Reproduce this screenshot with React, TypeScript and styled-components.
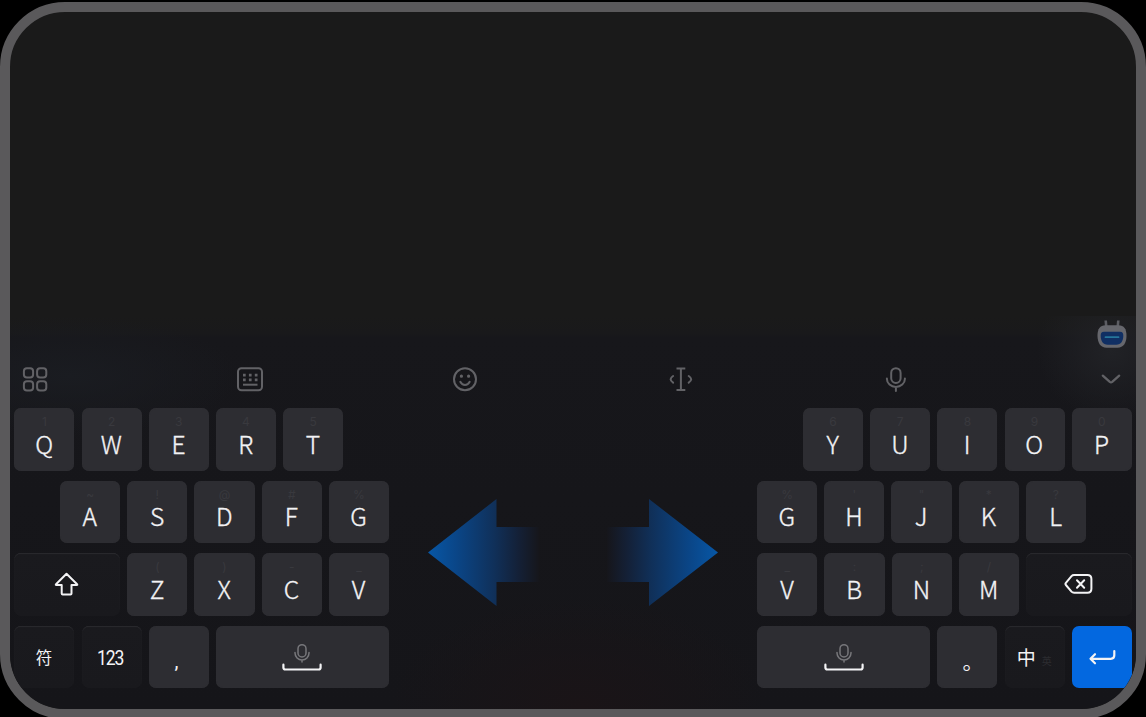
import React from 'react';
import styled, { createGlobalStyle, css } from 'styled-components';

const GlobalStyle = createGlobalStyle`
  * { box-sizing: border-box; }
  html, body { margin: 0; background: #000; overflow: hidden; }
`;

const Page = styled.main`
  height: 717px;
  width: 1146px;
  padding-top: 2px;
  overflow: hidden;
  background: #000;
`;

const Device = styled.div`
  width: 1146px;
  height: 717px;
  border: 10px solid #5a595b;
  border-radius: 65px;
  overflow: hidden;
  background: #1a1a1a;
  display: flex;
  flex-direction: column;
  font-family: 'Noto Sans CJK SC', 'Noto Sans', sans-serif;
`;

const Screen = styled.div`
  flex: 0 0 304px;
`;

const Keyboard = styled.section`
  flex: 1;
  display: flex;
  flex-direction: column;
  background:
    radial-gradient(ellipse 75px 70px at 1102px 34px, #212226 0%, #1d1e2200 100%),
    radial-gradient(ellipse 170px 60px at 60px 60px, #1a1c21 0%, #1a1c2100 100%),
    radial-gradient(ellipse 190px 110px at 570px 390px, #1a1417 0%, #1a141700 100%),
    linear-gradient(#1a1a1a 0, #19191b 18px, #17171b 22px, #16161a 180px, #151519 100%);
`;

const AssistantBar = styled.div`
  height: 44px;
  display: flex;
  justify-content: flex-end;
  padding: 2px 8.3px 0 0;
`;

const Toolbar = styled.nav`
  height: 38px;
  display: flex;
  justify-content: space-between;
  padding: 5px 10.5px 0 10.6px;
`;

const Tool = styled.svg`
  width: 28px;
  height: 28px;
  fill: none;
  stroke: #626266;
  stroke-width: 2;
  stroke-linecap: round;
  stroke-linejoin: round;
`;

const Board = styled.div`
  margin-top: 10.3px;
  padding: 0 4.2px 0 4.4px;
  display: flex;
  justify-content: space-between;
`;

const Half = styled.div`
  width: 374.5px;
  display: flex;
  flex-direction: column;
  gap: 10.2px;
`;

const Row = styled.div<{ $right?: boolean; $before?: number; $after?: number }>`
  display: flex;
  gap: 7.1px;
  justify-content: ${(p) => (p.$right ? 'flex-end' : 'flex-start')};
  padding-left: ${(p) => p.$before ?? 0}px;
  padding-right: ${(p) => p.$after ?? 0}px;
`;

const tones = {
  light: css`
    background: #2d2d32;
    box-shadow: inset 0 0 1px #37373b;
  `,
  dark: css`
    background: linear-gradient(#1a1a1e, #19191d);
    box-shadow: inset 0 1px 1px -0.5px #37373b;
  `,
  blue: css`
    background: #0368e0;
  `,
};

const Key = styled.div<{ $w?: number; $tone?: keyof typeof tones }>`
  flex: 0 0 ${(p) => p.$w ?? 60.1}px;
  height: 62.3px;
  border-radius: 7px;
  display: flex;
  flex-direction: column;
  align-items: center;
  color: #f3f3f5;
  ${(p) => tones[p.$tone ?? 'light']}
`;

const Hint = styled.span`
  height: 19.5px;
  padding-top: 6px;
  font: 12px/15px Inter, sans-serif;
  color: #39393e;
`;

const Letter = styled.span`
  font-size: 24.6px;
  line-height: 30px;
  padding-right: 0.6px;
  font-weight: 300;
  -webkit-text-stroke: 0.35px currentColor;
`;

const Caption = styled.span`
  font: 16.5px/62px 'Noto Sans CJK SC', sans-serif;
  padding-right: 1px;
`;

const Digits = styled.span`
  font: 20px/64px Roboto, sans-serif;
  letter-spacing: -1.2px;
  padding-right: 2.4px;
  transform: scaleX(0.88);
`;

const Comma = styled.span`
  font: 20px/30px Roboto, sans-serif;
  padding: 20px 4.5px 0 0;
`;

const FullStop = styled.span`
  font-size: 21px;
  line-height: 30px;
  padding: 19px 0 0 11px;
`;

const Language = styled.span`
  display: flex;
  align-items: baseline;
  gap: 6px;
  padding-right: 0.6px;
  font-size: 19px;
  line-height: 62.5px;
  small { font-size: 10px; color: #2c2c30; }
`;

const Glyph = styled.svg`
  margin: auto;
  fill: none;
  stroke: #f3f3f5;
  stroke-width: 2;
  stroke-linecap: round;
  stroke-linejoin: round;
`;

const Guides = styled.div`
  flex: 1;
  display: flex;
  justify-content: space-between;
  align-items: flex-start;
  padding: 90.7px 39.4px 0 39.2px;
`;

type K = [string, string];

const Letters = ({ keys }: { keys: K[] }) => (
  <>
    {keys.map(([l, h]) => (
      <Key key={l}>
        <Hint>{h}</Hint>
        <Letter>{l}</Letter>
      </Key>
    ))}
  </>
);

const Space = () => (
  <Key $w={173}>
    <Glyph width="40" height="30" viewBox="0 0 40 30">
      <g stroke="#77777b" strokeWidth="1.5">
        <rect x="16" y="2.7" width="8" height="12.2" rx="4" />
        <path d="M13 10.5v.6a7 7 0 0 0 14 0v-.6M20 18v2" />
      </g>
      <path d="M1.4 22.7v2.8q0 2 2 2h33.2q2 0 2-2v-2.8" strokeWidth="2.2" />
    </Glyph>
  </Key>
);

const Arrow = ({ right }: { right?: boolean }) => (
  <svg width="111" height="108" viewBox="0 0 111 108" fill="none">
    <defs>
      <linearGradient id={right ? 'toRight' : 'toLeft'} x1={right ? 1 : 0} x2={right ? 0 : 1} y1="0" y2="0">
        <stop offset="0" stopColor="#0757a6" />
        <stop offset="0.25" stopColor="#0a4688" />
        <stop offset="0.6" stopColor="#103059" />
        <stop offset="0.82" stopColor="#142036" />
        <stop offset="1" stopColor="#16161b" />
      </linearGradient>
    </defs>
    <path
      fill={`url(#${right ? 'toRight' : 'toLeft'})`}
      d={right ? 'M111 53.5 42 0v28H0v55h42v24z' : 'M0 53.5 68.5 0v28H111v55H68.5v24z'}
    />
  </svg>
);

export default function App() {
  return (
    <Page>
      <GlobalStyle />
      <Device>
        <Screen />
        <Keyboard>
          <AssistantBar>
            <svg width="32" height="32" viewBox="0 0 32 32">
              <path d="M9.7 2.5 10.3 9M22.3 2.5 21.7 9" stroke="#5c5d63" strokeWidth="2.6" />
              <path d="M9.5 7.2h13c5.500 0 8 3.500 8 10.500s-3 12-9 12h-11c-6 0-9-5-9-12S4 7.200 9.500 7.200z" fill="#66676d" />
              <path d="M8 13.800h16c2.500 0 3.300 1.500 3.300 4 0 5-2.300 9-7 9h-8.600c-4.700 0-7-4-7-9 0-2.500.8-4 3.300-4z" fill="#102f63" />
              <path d="M9.500 19.200h13" stroke="#26769b" strokeWidth="1.8" strokeLinecap="round" />
            </svg>
          </AssistantBar>
          <Toolbar>
            <Tool viewBox="0 0 28 28">
              <rect x="2.900" y="3.200" width="9.200" height="9.200" rx="3" />
              <rect x="16.100" y="3.200" width="9.200" height="9.200" rx="3" />
              <rect x="2.900" y="16.200" width="9.200" height="9.200" rx="3" />
              <rect x="16.100" y="16.200" width="9.200" height="9.200" rx="3" />
            </Tool>
            <Tool viewBox="0 0 28 28">
              <rect x="2" y="3.200" width="24" height="22" rx="3.500" />
              <path d="M7 10.200h2.700M12.900 10.200h2.700M18.800 10.200h2.700M7 14.900h2.700M12.900 14.900h2.700M18.800 14.900h2.700" strokeLinecap="butt" strokeWidth="2.7" />
              <path d="M7 19.700h14.500" strokeLinecap="butt" />
            </Tool>
            <Tool viewBox="0 0 28 28">
              <circle cx="14" cy="14.300" r="11" />
              <path d="M9.300 16.800q1.600 3.100 4.700 3.100t4.700-3.100" />
              <path d="M10.400 11.200h.01M17.600 11.200h.01" strokeWidth="3.2" />
            </Tool>
            <Tool viewBox="0 0 28 28">
              <path d="M9.500 3.400h8.800M13.900 3.400v21.600M9.500 25h8.800" strokeLinecap="butt" />
              <path d="M6.100 11q-5 3.300 0 6.600M21.700 11q5 3.300 0 6.600" />
            </Tool>
            <Tool viewBox="0 0 28 28">
              <rect x="9.200" y="3.200" width="9.400" height="14.800" rx="4.700" />
              <path d="M4.900 13.400v.5a9 8 0 0 0 18 0v-.5M13.900 22v4" />
            </Tool>
            <Tool viewBox="0 0 28 28">
              <path d="m5.800 10.700 7 6.200q1.200 1 2.400 0l7-6.200" strokeWidth="2.3" />
            </Tool>
          </Toolbar>
          <Board>
            <Half>
              <Row>
                <Letters keys={[['Q', '1'], ['W', '2'], ['E', '3'], ['R', '4'], ['T', '5']]} />
              </Row>
              <Row $before={45.7}>
                <Letters keys={[['A', '~'], ['S', '!'], ['D', '@'], ['F', '#'], ['G', '%']]} />
              </Row>
              <Row>
                <Key $w={105.8} $tone="dark">
                  <Glyph width="26" height="26" viewBox="0 0 26 26">
                    <path d="M12.500 2.800 2 13.300q-.6.700.3.700h5.400v8.500q0 1 1 1h7.800q1 0 1-1V14h5.300q.9 0 .3-.7z" />
                  </Glyph>
                </Key>
                <Letters keys={[['Z', '('], ['X', ')'], ['C', '-'], ['V', '_']]} />
              </Row>
              <Row>
                <Key $tone="dark"><Caption>符</Caption></Key>
                <Key $tone="dark"><Digits>123</Digits></Key>
                <Key><Comma>,</Comma></Key>
                <Space />
              </Row>
            </Half>
            <Guides>
              <Arrow />
              <Arrow right />
            </Guides>
            <Half>
              <Row $right>
                <Letters keys={[['Y', '6'], ['U', '7'], ['I', '8'], ['O', '9'], ['P', '0']]} />
              </Row>
              <Row $right $after={45.9}>
                <Letters keys={[['G', '%'], ['H', "'"], ['J', '"'], ['K', '*'], ['L', '?']]} />
              </Row>
              <Row $right>
                <Letters keys={[['V', '_'], ['B', ':'], ['N', ';'], ['M', '/']]} />
                <Key $w={105.8} $tone="dark">
                  <Glyph width="30" height="24" viewBox="0 0 30 24">
                    <path d="M10.100 3h13.300q4 0 4 4v9.800q0 4-4 4H10.100q-1.600 0-2.600-1.100L1.900 13q-.9-1.100 0-2.200l5.600-6.700Q8.500 3 10.100 3z" />
                    <path d="m13 8.200 7.200 7.500M20.200 8.200 13 15.700" />
                  </Glyph>
                </Key>
              </Row>
              <Row $right>
                <Space />
                <Key><FullStop>。</FullStop></Key>
                <Key $tone="dark"><Language>中<small>英</small></Language></Key>
                <Key $tone="blue">
                  <Glyph width="28" height="20" viewBox="0 0 28 20">
                    <path d="M26.300 4v4.300q0 3.500-3.500 3.500H2.500M7 7.200l-4.500 4.600L7 16.300" strokeWidth="2.2" />
                  </Glyph>
                </Key>
              </Row>
            </Half>
          </Board>
        </Keyboard>
      </Device>
    </Page>
  );
}
